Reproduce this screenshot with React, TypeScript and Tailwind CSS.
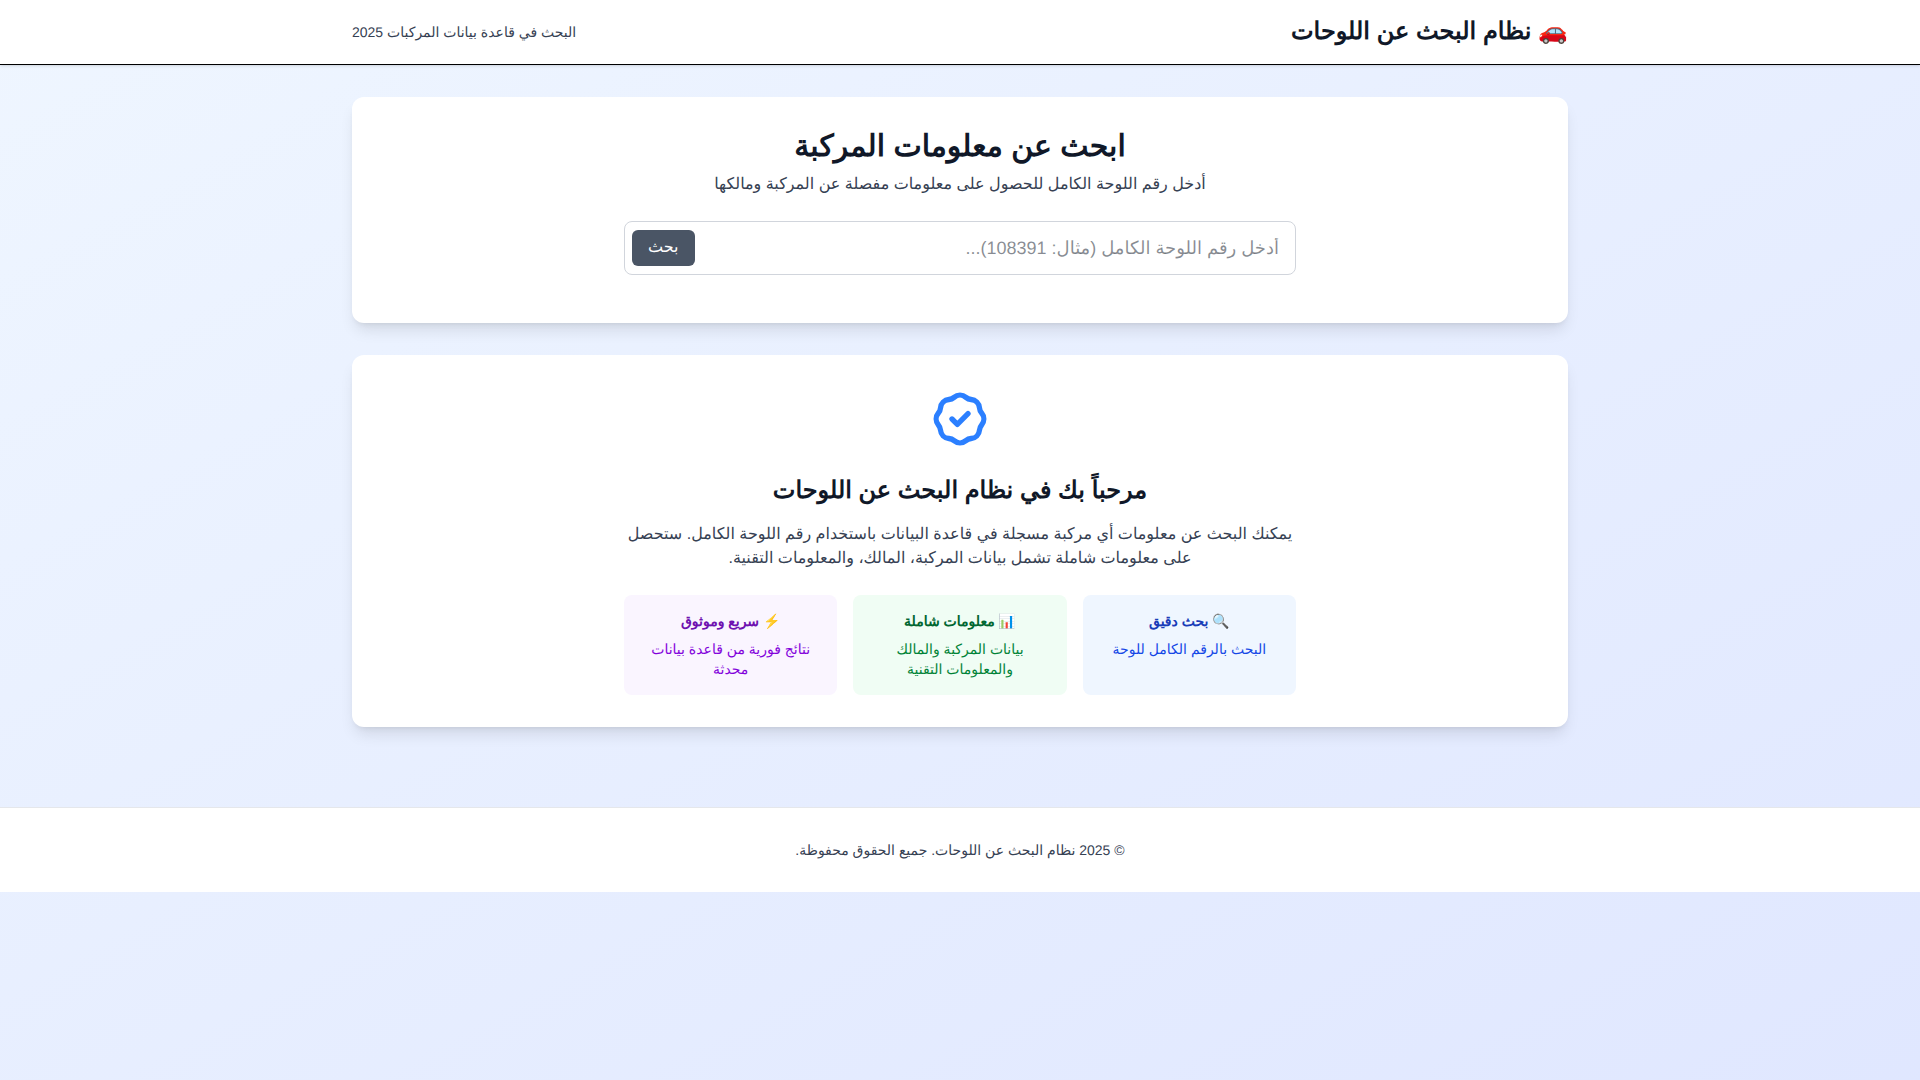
import { useState } from "react"

const features = [
  {
    title: "🔍 بحث دقيق",
    description: "البحث بالرقم الكامل للوحة",
    box: "bg-blue-50",
    heading: "text-blue-800",
    text: "text-blue-700",
  },
  {
    title: "📊 معلومات شاملة",
    description: "بيانات المركبة والمالك والمعلومات التقنية",
    box: "bg-green-50",
    heading: "text-green-800",
    text: "text-green-700",
  },
  {
    title: "⚡ سريع وموثوق",
    description: "نتائج فورية من قاعدة بيانات محدثة",
    box: "bg-purple-50",
    heading: "text-purple-800",
    text: "text-purple-700",
  },
]

export default function App() {
  const [query, setQuery] = useState("")

  return (
    <div
      dir="rtl"
      lang="ar"
      className="min-h-screen bg-gradient-to-br from-blue-50 to-indigo-100 font-['Liberation_Sans',Arial,sans-serif] [text-rendering:geometricPrecision]"
    >
      {/* Header */}
      <header className="bg-white shadow-sm border-b">
        <div className="max-w-7xl mx-auto px-4 sm:px-6 lg:px-8 py-4">
          <div className="flex items-center justify-between">
            <h1 className="text-2xl font-bold text-gray-900">🚗 نظام البحث عن اللوحات</h1>
            <div className="text-sm text-gray-700">البحث في قاعدة بيانات المركبات 2025</div>
          </div>
        </div>
      </header>

      <main className="max-w-7xl mx-auto px-4 sm:px-6 lg:px-8 py-8">
        {/* Search Section */}
        <div className="bg-white rounded-xl shadow-lg p-8 mb-8">
          <div className="text-center mb-6">
            <h2 className="text-3xl font-bold text-gray-900 mb-2">ابحث عن معلومات المركبة</h2>
            <p className="text-gray-700">أدخل رقم اللوحة الكامل للحصول على معلومات مفصلة عن المركبة ومالكها</p>
          </div>
          <form className="max-w-2xl mx-auto mb-4" onSubmit={(e) => e.preventDefault()}>
            <div className="relative">
              <input
                type="text"
                aria-label="رقم اللوحة"
                value={query}
                onChange={(e) => setQuery(e.target.value)}
                placeholder="أدخل رقم اللوحة الكامل (مثال: 108391)..."
                className="block w-full px-4 py-3 text-lg text-gray-900 border border-gray-300 rounded-lg focus:outline-none focus:border-blue-500 [text-rendering:inherit]"
              />
              <button
                type="submit"
                className="absolute left-2 top-1/2 -translate-y-1/2 bg-gray-600 text-white px-4 py-1.5 rounded-md hover:bg-gray-700 [text-rendering:inherit]"
              >
                بحث
              </button>
            </div>
          </form>
        </div>

        {/* Welcome Section */}
        <div className="bg-white rounded-xl shadow-lg p-8 text-center">
          <svg
            className="w-16 h-16 mx-auto mb-6 text-blue-500"
            fill="none"
            stroke="currentColor"
            viewBox="0 0 24 24"
            aria-hidden="true"
          >
            <path
              strokeLinecap="round"
              strokeLinejoin="round"
              strokeWidth={2}
              d="M9 12l2 2 4-4M7.835 4.697a3.42 3.42 0 001.946-.806 3.42 3.42 0 014.438 0 3.42 3.42 0 001.946.806 3.42 3.42 0 013.138 3.138 3.42 3.42 0 00.806 1.946 3.42 3.42 0 010 4.438 3.42 3.42 0 00-.806 1.946 3.42 3.42 0 01-3.138 3.138 3.42 3.42 0 00-1.946.806 3.42 3.42 0 01-4.438 0 3.42 3.42 0 00-1.946-.806 3.42 3.42 0 01-3.138-3.138 3.42 3.42 0 00-.806-1.946 3.42 3.42 0 010-4.438 3.42 3.42 0 00.806-1.946 3.42 3.42 0 013.138-3.138z"
            />
          </svg>
          <h3 className="text-2xl font-bold text-gray-900 mb-4">مرحباً بك في نظام البحث عن اللوحات</h3>
          <p className="text-gray-700 max-w-2xl mx-auto mb-6">
            يمكنك البحث عن معلومات أي مركبة مسجلة في قاعدة البيانات باستخدام رقم اللوحة الكامل. ستحصل على معلومات
            شاملة تشمل بيانات المركبة، المالك، والمعلومات التقنية.
          </p>
          <div className="grid grid-cols-1 md:grid-cols-3 gap-4 max-w-2xl mx-auto text-sm">
            {features.map((feature) => (
              <div key={feature.title} className={`p-4 rounded-lg ${feature.box}`}>
                <h4 className={`font-semibold mb-2 ${feature.heading}`}>{feature.title}</h4>
                <p className={feature.text}>{feature.description}</p>
              </div>
            ))}
          </div>
        </div>
      </main>

      {/* Footer */}
      <footer className="bg-white border-t border-gray-200 mt-12">
        <div className="max-w-7xl mx-auto px-4 sm:px-6 lg:px-8 py-8">
          <p className="text-center text-sm text-gray-700">© 2025 نظام البحث عن اللوحات. جميع الحقوق محفوظة.</p>
        </div>
      </footer>
    </div>
  )
}
